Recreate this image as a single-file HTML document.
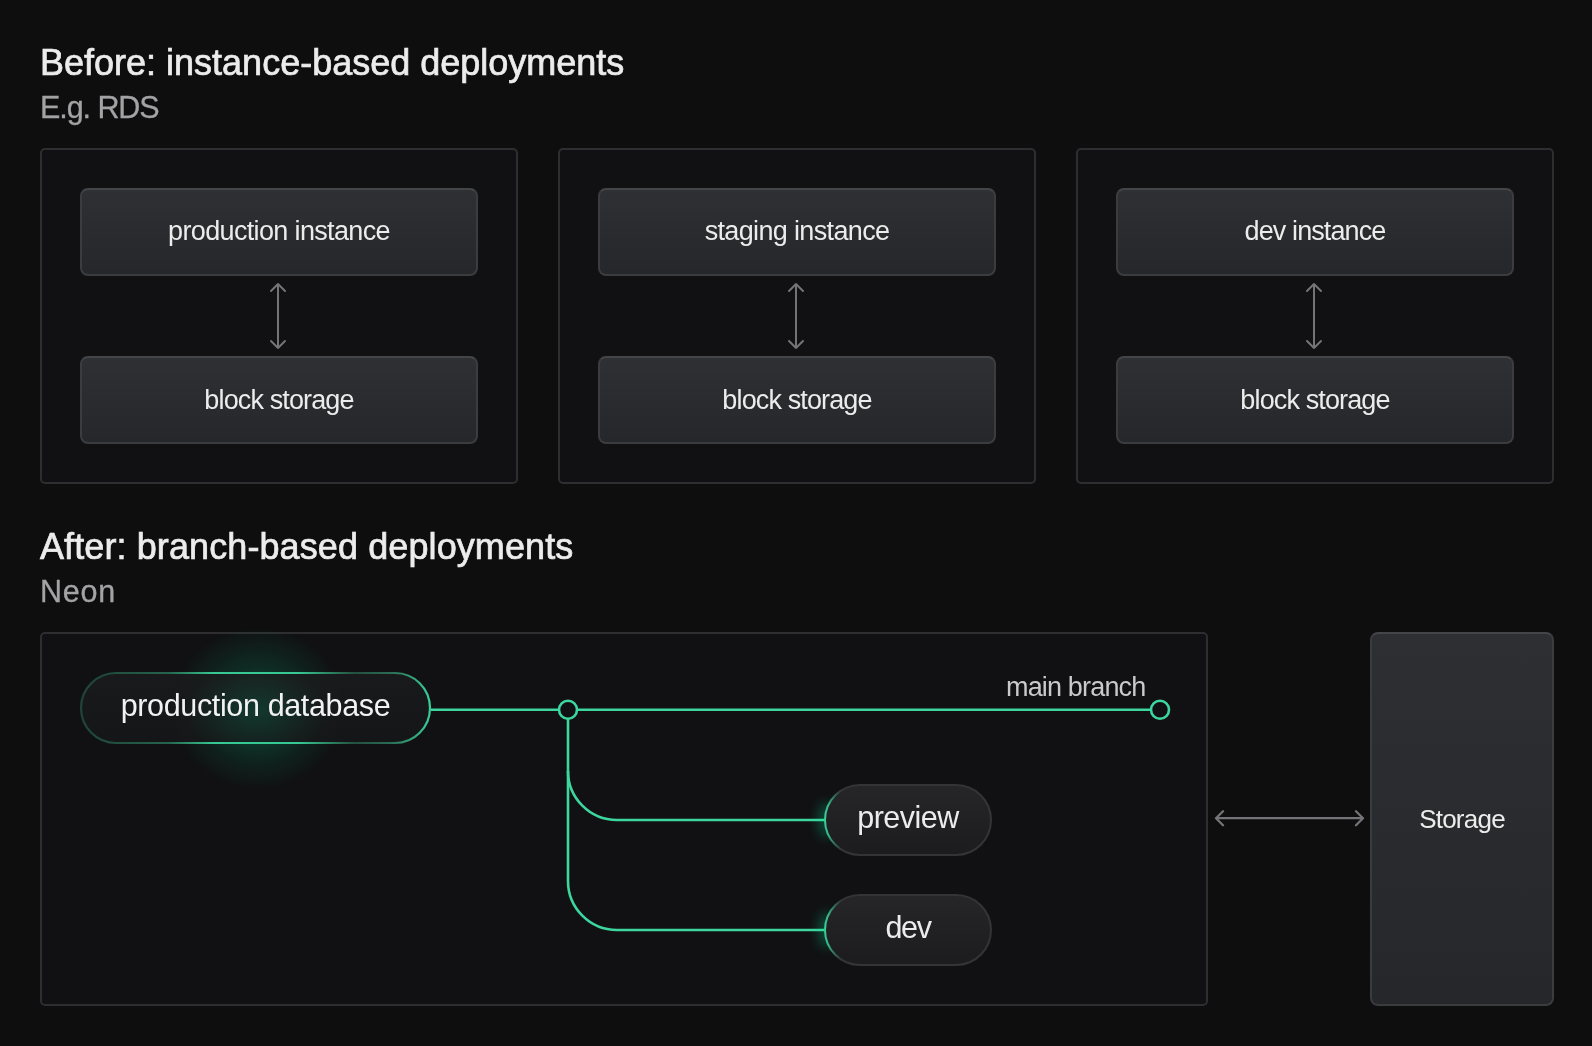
<!DOCTYPE html>
<html>
<head>
<meta charset="utf-8">
<style>
html,body{margin:0;padding:0;}
body{width:1592px;height:1046px;background:#0e0e0e;position:relative;overflow:hidden;font-family:"Liberation Sans",sans-serif;}
.t{position:absolute;white-space:nowrap;line-height:1;will-change:transform;}
.h{font-size:36px;color:#ececec;-webkit-text-stroke:0.7px #ececec;}
.sub{font-size:30px;color:#a3a3a6;-webkit-text-stroke:0.3px #a3a3a6;}
.panel{position:absolute;box-sizing:border-box;border:2px solid #2e2e31;border-radius:5px;background:#111113;}
.ibox{position:absolute;box-sizing:border-box;width:398px;height:88px;border:2px solid #3b3c3f;border-top-color:#444548;border-radius:8px;background:linear-gradient(180deg,#2f3034 0%,#26272a 100%);}
.lbl{position:absolute;will-change:transform;left:0;right:0;text-align:center;font-size:27px;letter-spacing:-0.65px;color:#ececec;line-height:1;white-space:nowrap;}
svg{position:absolute;left:0;top:0;}
</style>
</head>
<body>
<div class="t h" style="left:40px;top:45px;">Before: instance-based deployments</div>
<div class="t sub" style="left:40px;top:92px;font-size:30.5px;letter-spacing:-1.07px;">E.g. RDS</div>

<div class="panel" style="left:40px;top:148px;width:478px;height:336px;"></div>
<div class="panel" style="left:558px;top:148px;width:478px;height:336px;"></div>
<div class="panel" style="left:1076px;top:148px;width:478px;height:336px;"></div>

<div class="ibox" style="left:80px;top:188px;"><div class="lbl" style="top:28px;">production instance</div></div>
<div class="ibox" style="left:80px;top:356px;"><div class="lbl" style="top:29px;letter-spacing:-0.87px;">block storage</div></div>
<div class="ibox" style="left:598px;top:188px;"><div class="lbl" style="top:28px;">staging instance</div></div>
<div class="ibox" style="left:598px;top:356px;"><div class="lbl" style="top:29px;letter-spacing:-0.87px;">block storage</div></div>
<div class="ibox" style="left:1116px;top:188px;"><div class="lbl" style="top:28px;letter-spacing:-0.9px;">dev instance</div></div>
<div class="ibox" style="left:1116px;top:356px;"><div class="lbl" style="top:29px;letter-spacing:-0.87px;">block storage</div></div>

<div class="t h" style="left:40px;top:529px;letter-spacing:0.1px;">After: branch-based deployments</div>
<div class="t sub" style="left:40px;top:576px;font-size:30.5px;letter-spacing:0.8px;">Neon</div>

<div class="panel" style="left:40px;top:632px;width:1168px;height:374px;"></div>


<svg width="1592" height="1046" viewBox="0 0 1592 1046">
  <defs>
    <radialGradient id="glowIn" cx="0.5" cy="0.5" r="0.5">
      <stop offset="0" stop-color="#00e599" stop-opacity="0.12"/>
      <stop offset="1" stop-color="#00e599" stop-opacity="0"/>
    </radialGradient>
    <radialGradient id="glow" cx="0.5" cy="0.5" r="0.5">
      <stop offset="0" stop-color="#00e599" stop-opacity="0.32"/>
      <stop offset="0.45" stop-color="#00e599" stop-opacity="0.14"/>
      <stop offset="1" stop-color="#00e599" stop-opacity="0"/>
    </radialGradient>
    <linearGradient id="pillStroke" x1="80" y1="0" x2="432" y2="0" gradientUnits="userSpaceOnUse">
      <stop offset="0" stop-color="#1f4436"/>
      <stop offset="0.25" stop-color="#25634c"/>
      <stop offset="0.38" stop-color="#38c893"/>
      <stop offset="0.62" stop-color="#38c893"/>
      <stop offset="0.78" stop-color="#24503f"/>
      <stop offset="0.88" stop-color="#2a6b53"/>
      <stop offset="1" stop-color="#3ad39a"/>
    </linearGradient>
    <linearGradient id="pillFill" x1="0" y1="0" x2="0" y2="1">
      <stop offset="0" stop-color="#1b1c1e"/>
      <stop offset="1" stop-color="#161719"/>
    </linearGradient>
    <linearGradient id="bpFill" x1="0" y1="0" x2="0" y2="1">
      <stop offset="0" stop-color="#262628"/>
      <stop offset="1" stop-color="#1c1c1e"/>
    </linearGradient>
    <radialGradient id="bpStroke1" cx="824" cy="820" r="34" gradientUnits="userSpaceOnUse">
      <stop offset="0" stop-color="#3ad39a"/>
      <stop offset="0.45" stop-color="#36b888"/>
      <stop offset="1" stop-color="#343436"/>
    </radialGradient>
    <radialGradient id="bpStroke2" cx="824" cy="930" r="34" gradientUnits="userSpaceOnUse">
      <stop offset="0" stop-color="#3ad39a"/>
      <stop offset="0.45" stop-color="#36b888"/>
      <stop offset="1" stop-color="#343436"/>
    </radialGradient>
    <filter id="blur6" x="-100%" y="-100%" width="300%" height="300%"><feGaussianBlur stdDeviation="6"/></filter>
    <radialGradient id="sglow" cx="0.5" cy="0.5" r="0.5">
      <stop offset="0" stop-color="#00e599" stop-opacity="0.35"/>
      <stop offset="1" stop-color="#00e599" stop-opacity="0"/>
    </radialGradient>
  </defs>
  <ellipse cx="258" cy="708" rx="88" ry="82" fill="url(#glow)"/>
  <rect x="81" y="673" width="349" height="70" rx="35" fill="url(#pillFill)" fill-opacity="0.85" stroke="url(#pillStroke)" stroke-width="2.2"/>
  <ellipse cx="256" cy="712" rx="70" ry="45" fill="url(#glowIn)"/>
  <g stroke="#3dd69e" stroke-width="2.6" fill="none">
    <path d="M431 709.8 H1150"/>
    <path d="M568 719 V881 A49 49 0 0 0 617 930 H824"/>
    <path d="M568 771 A49 49 0 0 0 617 820 H824"/>
    <circle cx="568" cy="709.8" r="9" fill="#111113"/>
    <circle cx="1160" cy="709.8" r="9" fill="#111113"/>
  </g>
  <ellipse cx="826" cy="820" rx="8" ry="18" fill="#00e599" opacity="0.28" filter="url(#blur6)"/>
  <ellipse cx="826" cy="930" rx="8" ry="18" fill="#00e599" opacity="0.28" filter="url(#blur6)"/>
  <rect x="825" y="785" width="166" height="70" rx="35" fill="url(#bpFill)" stroke="url(#bpStroke1)" stroke-width="2"/>
  <rect x="825" y="895" width="166" height="70" rx="35" fill="url(#bpFill)" stroke="url(#bpStroke2)" stroke-width="2"/>
</svg>
<div class="t" style="left:80px;width:351px;text-align:center;top:690px;font-size:30.5px;letter-spacing:-0.36px;color:#f2f2f2;">production database</div>
<div class="t" style="left:1006px;top:674px;font-size:27px;letter-spacing:-0.83px;color:#c9c9cc;">main branch</div>
<div class="t" style="left:824px;width:168px;text-align:center;top:802px;font-size:30.5px;letter-spacing:-0.53px;color:#ececec;">preview</div>
<div class="t" style="left:824px;width:168px;text-align:center;top:912px;font-size:30.5px;letter-spacing:-1.4px;color:#ececec;">dev</div>

<svg width="1592" height="1046" viewBox="0 0 1592 1046">
  <g stroke="#747478" stroke-width="2" fill="none" stroke-linecap="round" stroke-linejoin="round">
    <path d="M278 284 V348 M271 291 L278 284 L285 291 M271 341 L278 348 L285 341"/>
    <path d="M796 284 V348 M789 291 L796 284 L803 291 M789 341 L796 348 L803 341"/>
    <path d="M1314 284 V348 M1307 291 L1314 284 L1321 291 M1307 341 L1314 348 L1321 341"/>
    <path d="M1216 818.2 H1363 M1223 811.2 L1216 818.2 L1223 825.2 M1356 811.2 L1363 818.2 L1356 825.2" stroke-width="2.3"/>
  </g>
</svg>

<div style="position:absolute;left:1370px;top:632px;width:184px;height:374px;box-sizing:border-box;border:2px solid #3b3c3f;border-top-color:#444548;border-radius:8px;background:linear-gradient(180deg,#2e2f33 0%,#26272a 100%);"></div>
<div class="t" style="left:1370px;width:184px;text-align:center;top:806px;font-size:26px;letter-spacing:-0.77px;color:#ececec;">Storage</div>

</body>
</html>
